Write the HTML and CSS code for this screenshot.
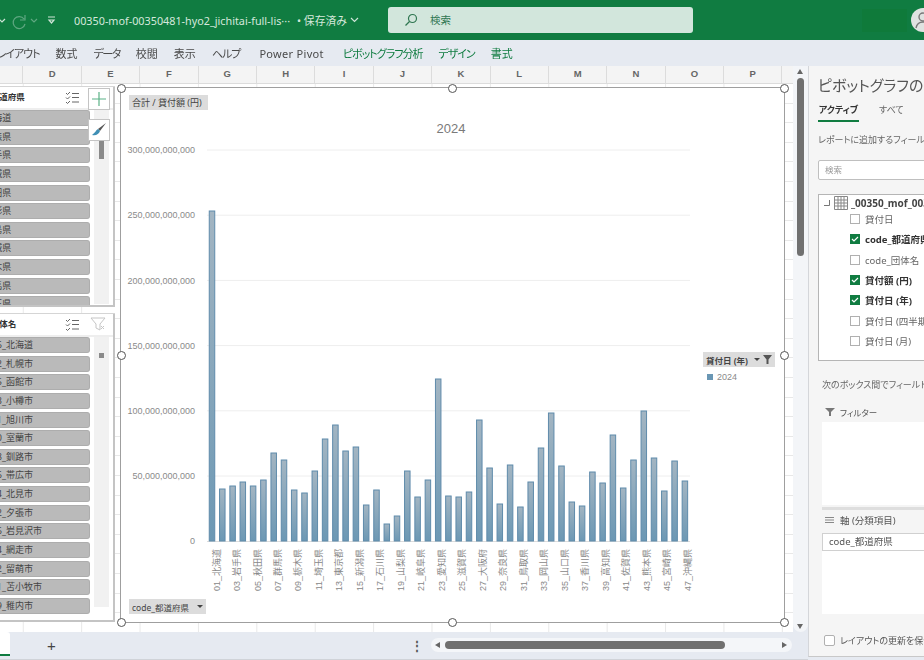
FILE: index.html
```html
<!DOCTYPE html>
<html lang="ja">
<head>
  <meta charset="UTF-8">
  <title>00350-mof-00350481-hyo2_jichitai-full-list</title>
  <link rel="stylesheet" href="styles.css">
</head>
<body>
  <header class="titlebar">
    <svg class="qat" width="62" height="20" viewBox="0 0 62 20">
      <path d="M0 9l3 3 3-3" class="qat-line"/>
      <path d="M26 5v5h-5M25 9a6 6 0 1 0 1 5" class="qat-dim"/>
      <path d="M32 9l3 3 3-3" class="qat-dim"/>
      <path d="M49 7h7M50 10h5l-2.500 3z" class="qat-line"/>
    </svg>
    <span class="filename">00350-mof-00350481-hyo2_jichitai-full-lis···</span>
    <span class="saved">• 保存済み
      <svg width="9" height="6" viewBox="0 0 9 6"><path d="M1 1l3.500 3.500L8 1" class="qat-line"/></svg>
    </span>
    <div class="search">
      <svg width="14" height="14" viewBox="0 0 14 14"><circle cx="8.500" cy="5.500" r="4" class="search-icon"/><path d="M5.500 8.500L1.500 12.500" class="search-icon"/></svg>
      <span>検索</span>
    </div>
    <div class="account-block"></div>
    <div class="avatar">
      <svg width="24" height="24" viewBox="0 0 24 24"><circle cx="12" cy="9" r="4" class="avatar-line"/><path d="M5 20c1-5 4-6 7-6s6 1 7 6" class="avatar-line"/></svg>
    </div>
  </header>

  <nav class="ribbon">
    <span class="kana">ページレイアウト</span>
    <span>数式</span>
    <span class="kana-tight">データ</span>
    <span>校閲</span>
    <span>表示</span>
    <span class="kana">ヘルプ</span>
    <span class="pp">Power Pivot</span>
    <span class="context kana">ピボットグラフ分析</span>
    <span class="context kana">デザイン</span>
    <span class="context">書式</span>
  </nav>

  <main class="workspace">
    <div class="sheet-col">
      <div class="sheet-row">
        <section class="sheet">
          <div class="col-heads">
            <span class="col-stub"></span>
            <span>D</span><span>E</span><span>F</span><span>G</span><span>H</span><span>I</span><span>J</span>
            <span>K</span><span>L</span><span>M</span><span>N</span><span>O</span><span>P</span>
          </div>
          <div class="grid">
            <div class="slicer slicer-pref">
              <div class="slicer-head">
                <span class="slicer-title">code_都道府県</span>
                <svg class="multi" width="15" height="13" viewBox="0 0 15 13"><path d="M1 2l1.500 1.500L5 1M1 6.500L2.500 8 5 5.500M1 11l1.500 1.500L5 10M7 2.500h7M7 6.500h7M7 11h7"/></svg>
              </div>
              <div class="slicer-body">
                <ul class="slicer-items">
                  <li>01_北海道</li><li>02_青森県</li><li>03_岩手県</li><li>04_宮城県</li>
                  <li>05_秋田県</li><li>06_山形県</li><li>07_福島県</li><li>08_茨城県</li>
                  <li>09_栃木県</li><li>10_群馬県</li><li>11_埼玉県</li>
                </ul>
                <div class="slicer-track"><span class="thumb-pref"></span></div>
              </div>
            </div>

            <div class="slicer slicer-city">
              <div class="slicer-head">
                <span class="slicer-title">code_団体名</span>
                <svg class="multi" width="15" height="13" viewBox="0 0 15 13"><path d="M1 2l1.500 1.500L5 1M1 6.500L2.500 8 5 5.500M1 11l1.500 1.500L5 10M7 2.500h7M7 6.500h7M7 11h7"/></svg>
                <svg class="clear" width="16" height="14" viewBox="0 0 16 14"><path d="M1 1h14l-5 6v6l-4-2V7z"/><path d="M11 9l3 3M14 9l-3 3"/></svg>
              </div>
              <div class="slicer-body">
                <ul class="slicer-items">
                  <li>010006_北海道</li><li>011002_札幌市</li><li>012025_函館市</li><li>012033_小樽市</li>
                  <li>012041_旭川市</li><li>012050_室蘭市</li><li>012068_釧路市</li><li>012076_帯広市</li>
                  <li>012084_北見市</li><li>012092_夕張市</li><li>012106_岩見沢市</li><li>012114_網走市</li>
                  <li>012122_留萌市</li><li>012131_苫小牧市</li><li>012149_稚内市</li>
                </ul>
                <div class="slicer-track"><span class="thumb-city"></span></div>
              </div>
            </div>

            <button class="float-btn float-add">
              <svg width="16" height="16" viewBox="0 0 16 16"><path d="M8 1v14M1 8h14" class="plus-line"/></svg>
            </button>
            <button class="float-btn float-brush">
              <svg width="16" height="16" viewBox="0 0 16 16"><path d="M15 1L7 7l2 2z" fill="#555"/><path d="M7 7c-2 1-3 4-6 6 4 1 7-1 8-4z" fill="#3f8fb5"/></svg>
            </button>

            <div class="chart">
              <svg class="plot" width="663" height="534" viewBox="121 88 663 534">
                <defs>
                  <linearGradient id="bar-fill" x1="0" y1="0" x2="0" y2="1">
                    <stop offset="0" stop-color="#a3b5c2"/>
                    <stop offset="1" stop-color="#6c98b4"/>
                  </linearGradient>
                </defs>
                <g class="gridlines">
                  <path d="M207 150H690M207 215.200H690M207 280.400H690M207 345.600H690M207 410.800H690M207 476H690"/>
                  <path d="M207 541.500H690" class="baseline"/>
                </g>
                <text x="451" y="133" class="chart-title">2024</text>
                <g class="y-labels">
                  <text x="195" y="153">300,000,000,000</text>
                  <text x="195" y="218">250,000,000,000</text>
                  <text x="195" y="284">200,000,000,000</text>
                  <text x="195" y="349">150,000,000,000</text>
                  <text x="195" y="414">100,000,000,000</text>
                  <text x="195" y="479">50,000,000,000</text>
                  <text x="195" y="544">0</text>
                </g>
                <g class="bars">
                  <rect x="209" y="211" width="6" height="330"/>
                  <rect x="219.300" y="489" width="6" height="52"/>
                  <rect x="229.600" y="486" width="6" height="55"/>
                  <rect x="239.800" y="482" width="6" height="59"/>
                  <rect x="250.100" y="486" width="6" height="55"/>
                  <rect x="260.400" y="480" width="6" height="61"/>
                  <rect x="270.700" y="453" width="6" height="88"/>
                  <rect x="281" y="460" width="6" height="81"/>
                  <rect x="291.200" y="490" width="6" height="51"/>
                  <rect x="301.500" y="493" width="6" height="48"/>
                  <rect x="311.800" y="471" width="6" height="70"/>
                  <rect x="322.100" y="439" width="6" height="102"/>
                  <rect x="332.400" y="425" width="6" height="116"/>
                  <rect x="342.600" y="451" width="6" height="90"/>
                  <rect x="352.900" y="447" width="6" height="94"/>
                  <rect x="363.200" y="505" width="6" height="36"/>
                  <rect x="373.500" y="490" width="6" height="51"/>
                  <rect x="383.800" y="524" width="6" height="17"/>
                  <rect x="394" y="516" width="6" height="25"/>
                  <rect x="404.300" y="471" width="6" height="70"/>
                  <rect x="414.600" y="497" width="6" height="44"/>
                  <rect x="424.900" y="480" width="6" height="61"/>
                  <rect x="435.200" y="379" width="6" height="162"/>
                  <rect x="445.400" y="496" width="6" height="45"/>
                  <rect x="455.700" y="497" width="6" height="44"/>
                  <rect x="466" y="492" width="6" height="49"/>
                  <rect x="476.300" y="420" width="6" height="121"/>
                  <rect x="486.600" y="468" width="6" height="73"/>
                  <rect x="496.800" y="504" width="6" height="37"/>
                  <rect x="507.100" y="465" width="6" height="76"/>
                  <rect x="517.400" y="507" width="6" height="34"/>
                  <rect x="527.700" y="482" width="6" height="59"/>
                  <rect x="538" y="448" width="6" height="93"/>
                  <rect x="548.200" y="413" width="6" height="128"/>
                  <rect x="558.500" y="466" width="6" height="75"/>
                  <rect x="568.800" y="502" width="6" height="39"/>
                  <rect x="579.100" y="506" width="6" height="35"/>
                  <rect x="589.400" y="472" width="6" height="69"/>
                  <rect x="599.600" y="483" width="6" height="58"/>
                  <rect x="609.900" y="435" width="6" height="106"/>
                  <rect x="620.200" y="488" width="6" height="53"/>
                  <rect x="630.500" y="460" width="6" height="81"/>
                  <rect x="640.800" y="411" width="6" height="130"/>
                  <rect x="651" y="458" width="6" height="83"/>
                  <rect x="661.300" y="491" width="6" height="50"/>
                  <rect x="671.600" y="461" width="6" height="80"/>
                  <rect x="681.900" y="481" width="6" height="60"/>
                </g>
                <g class="x-labels">
                  <text transform="translate(219.500 549) rotate(-90)">01_北海道</text>
                  <text transform="translate(240 549) rotate(-90)">03_岩手県</text>
                  <text transform="translate(260.500 549) rotate(-90)">05_秋田県</text>
                  <text transform="translate(280.900 549) rotate(-90)">07_群馬県</text>
                  <text transform="translate(301.400 549) rotate(-90)">09_栃木県</text>
                  <text transform="translate(321.900 549) rotate(-90)">11_埼玉県</text>
                  <text transform="translate(342.400 549) rotate(-90)">13_東京都</text>
                  <text transform="translate(362.900 549) rotate(-90)">15_新潟県</text>
                  <text transform="translate(383.300 549) rotate(-90)">17_石川県</text>
                  <text transform="translate(403.800 549) rotate(-90)">19_山梨県</text>
                  <text transform="translate(424.300 549) rotate(-90)">21_岐阜県</text>
                  <text transform="translate(444.800 549) rotate(-90)">23_愛知県</text>
                  <text transform="translate(465.300 549) rotate(-90)">25_滋賀県</text>
                  <text transform="translate(485.700 549) rotate(-90)">27_大阪府</text>
                  <text transform="translate(506.200 549) rotate(-90)">29_奈良県</text>
                  <text transform="translate(526.700 549) rotate(-90)">31_鳥取県</text>
                  <text transform="translate(547.200 549) rotate(-90)">33_岡山県</text>
                  <text transform="translate(567.700 549) rotate(-90)">35_山口県</text>
                  <text transform="translate(588.100 549) rotate(-90)">37_香川県</text>
                  <text transform="translate(608.600 549) rotate(-90)">39_高知県</text>
                  <text transform="translate(629.100 549) rotate(-90)">41_佐賀県</text>
                  <text transform="translate(649.600 549) rotate(-90)">43_熊本県</text>
                  <text transform="translate(670.100 549) rotate(-90)">45_宮崎県</text>
                  <text transform="translate(690.500 549) rotate(-90)">47_沖縄県</text>
                </g>
              </svg>

              <span class="field-btn field-value">合計 / 貸付額 (円)</span>
              <span class="field-btn field-axis">code_都道府県 <i class="caret"></i></span>
              <span class="field-btn field-legend">貸付日 (年) <i class="caret"></i>
                <svg width="9" height="9" viewBox="0 0 9 9"><path d="M0 0h9L5.500 4.500V9h-2V4.500z" fill="#555"/></svg>
              </span>
              <div class="legend"><i class="legend-key"></i>2024</div>

              <i class="handle h-tl"></i><i class="handle h-tc"></i><i class="handle h-tr"></i>
              <i class="handle h-ml"></i><i class="handle h-mr"></i>
              <i class="handle h-bl"></i><i class="handle h-bc"></i><i class="handle h-br"></i>
            </div>
          </div>
        </section>

        <div class="vscroll">
          <i class="arrow-up"></i>
          <span class="vthumb"></span>
          <i class="arrow-down"></i>
        </div>
      </div>

      <footer class="statusbar">
        <span class="sheet-tab"></span>
        <span class="add-sheet">+</span>
        <span class="dots">⋮</span>
        <div class="hscroll">
          <i class="arrow-left"></i>
          <span class="hthumb"></span>
          <i class="arrow-right"></i>
        </div>
      </footer>
    </div>

    <aside class="pane">
      <h2 class="pane-title">ピボットグラフのフィールド</h2>
      <div class="pane-tabs">
        <span class="pane-tab active">アクティブ</span>
        <span class="pane-tab">すべて</span>
      </div>
      <p class="pane-note">レポートに追加するフィールドを選択してください:</p>
      <div class="pane-search">検索</div>
      <div class="field-list">
        <div class="table-row">
          <svg class="tree-corner" width="6" height="6" viewBox="0 0 6 6"><path d="M0 5.500h5.500V0"/></svg>
          <svg width="14" height="14" viewBox="0 0 14 14"><path d="M.5.500h13v13H.5zM.5 4h13M.5 7h13M.5 10h13M4 .5v13M7 .5v13M10 .5v13" class="table-icon"/></svg>
          <b>_00350_mof_00350481</b>
        </div>
        <label class="field"><i class="box"></i>貸付日</label>
        <label class="field on"><i class="box"><svg width="10" height="10" viewBox="0 0 10 10"><path d="M2 5l2 2 4-4" class="tick"/></svg></i>code_都道府県</label>
        <label class="field"><i class="box"></i>code_団体名</label>
        <label class="field on"><i class="box"><svg width="10" height="10" viewBox="0 0 10 10"><path d="M2 5l2 2 4-4" class="tick"/></svg></i>貸付額 (円)</label>
        <label class="field on"><i class="box"><svg width="10" height="10" viewBox="0 0 10 10"><path d="M2 5l2 2 4-4" class="tick"/></svg></i>貸付日 (年)</label>
        <label class="field"><i class="box"></i>貸付日 (四半期)</label>
        <label class="field"><i class="box"></i>貸付日 (月)</label>
      </div>
      <p class="pane-note drag-note">次のボックス間でフィールドをドラッグしてください:</p>
      <div class="area-label">
        <svg width="10" height="10" viewBox="0 0 10 10"><path d="M0 1h10L6 5v4H4V5z" fill="#777"/></svg>
        <span>フィルター</span>
      </div>
      <div class="area-box area-filter"></div>
      <div class="area-split"></div>
      <div class="area-label">
        <svg width="10" height="10" viewBox="0 0 10 10"><path d="M0 2.500h9M0 5h9M0 7.500h9" class="lines-icon"/></svg>
        <span>軸 (分類項目)</span>
      </div>
      <div class="area-box area-axis"><div class="area-item">code_都道府県</div></div>
      <label class="defer"><i class="box"></i>レイアウトの更新を保留する</label>
    </aside>
  </main>
</body>
</html>
```

FILE: styles.css
```css
* {
  box-sizing: border-box;
}
html, body {
  margin: 0;
  height: 100%;
}
body {
  width: 924px;
  height: 660px;
  overflow: hidden;
  display: flex;
  flex-direction: column;
  font-family: "Noto Sans", "Noto Sans CJK JP", sans-serif;
  font-feature-settings: "palt";
  background: #e6eaf1;
  color: #444;
  filter: blur(0.55px);
}
i {
  font-style: normal;
}

/* title bar */
.titlebar {
  height: 40px;
  flex: none;
  display: flex;
  align-items: center;
  background: #107c41;
  color: #d5e8dc;
  font-size: 10.800px;
}
.titlebar > * {
  flex: none;
}
.qat {
  margin: 0 13px 0 -1px;
}
.qat-line {
  fill: none;
  stroke: #cfe5d8;
  stroke-width: 1.2;
}
.qat-dim {
  fill: none;
  stroke: #5fa781;
  stroke-width: 1.2;
}
.filename {
  width: 223px;
  white-space: nowrap;
}
.saved {
  width: 91px;
  display: flex;
  align-items: center;
  gap: 3px;
  white-space: nowrap;
}
.search {
  width: 305px;
  height: 26px;
  margin-top: -1px;
  padding-left: 16px;
  display: flex;
  align-items: center;
  gap: 12px;
  background: #d2e6dc;
  border-radius: 3px;
  color: #2f7651;
  font-size: 10.500px;
}
.search-icon {
  fill: none;
  stroke: #2f7651;
  stroke-width: 1.2;
}
.account-block {
  width: 45px;
  height: 23px;
  margin-left: 169px;
  background: #0f7a3a;
}
.avatar {
  width: 24px;
  height: 24px;
  margin-left: 4px;
  border-radius: 50%;
  background: #dfe3e1;
}
.avatar-line {
  fill: none;
  stroke: #777;
  stroke-width: 1.4;
}

/* ribbon tabs */
.ribbon {
  height: 26px;
  flex: none;
  margin-left: -33px;
  display: flex;
  align-items: center;
  gap: 16px;
  font-size: 11px;
  color: #4a4a4a;
  white-space: nowrap;
}
.ribbon .context {
  color: #107c41;
}
.ribbon .kana {
  letter-spacing: -1px;
}
.ribbon .kana-tight {
  letter-spacing: -1.500px;
}
.ribbon .pp {
  margin: 0 3px;
  letter-spacing: 0.300px;
}

/* sheet */
.workspace {
  flex: 1;
  min-height: 0;
  display: flex;
}
.sheet-col {
  width: 808px;
  flex: none;
  display: flex;
  flex-direction: column;
}
.sheet-row {
  flex: 1;
  min-height: 0;
  display: flex;
}
.sheet {
  width: 793px;
  flex: none;
  display: flex;
  flex-direction: column;
  overflow: hidden;
}
.col-heads {
  height: 18px;
  flex: none;
  display: flex;
  background: #f4f4f4;
  border-bottom: 1px solid #dcdcdc;
}
.col-heads span {
  width: 58.400px;
  flex: none;
  text-align: center;
  border-right: 1px solid #dcdcdc;
  font: 700 9.500px/16px "Liberation Sans", sans-serif;
  color: #666;
}
.col-heads .col-stub {
  width: 23.400px;
}
.grid {
  flex: 1;
  position: relative;
  background-color: #fff;
  background-image:
    repeating-linear-gradient(90deg, transparent 0 22.900px, #e8e8e8 22.900px 23.400px, transparent 23.400px 23.400px),
    repeating-linear-gradient(180deg, transparent 0 18.600px, #e8e8e8 18.600px 19.600px);
  background-size: 58.400px 100%, 100% 100%;
}

/* slicers */
.slicer {
  position: absolute;
  left: -62px;
  width: 177px;
  background: #fff;
  border: 1px solid #c4c4c4;
  border-width: 0 2px 2px 1px;
  box-shadow: 0 -1px 0 #d5d5d5;
}
.slicer-pref {
  top: 3px;
  height: 220px;
}
.slicer-city {
  top: 230px;
  height: 308px;
}
.slicer-head {
  height: 23px;
  position: relative;
  padding-left: 28px;
  font-size: 8.500px;
  line-height: 20px;
  border-bottom: 2px solid #eee;
  color: #333;
}
.slicer-title {
  font-weight: 700;
}
.multi {
  position: absolute;
  left: 126px;
  top: 4px;
  fill: none;
  stroke: #666;
}
.clear {
  position: absolute;
  left: 151px;
  top: 3px;
  fill: none;
  stroke: #c5c5c5;
}
.slicer-body {
  display: flex;
  overflow: hidden;
  height: calc(100% - 23px);
}
.slicer-items {
  list-style: none;
  width: 151px;
  flex: none;
  margin: 0;
  padding: 0;
}
.slicer-items li {
  height: 16px;
  margin: 0 0 2.640px 0;
  padding-left: 31px;
  background: #bababa;
  border: 1px solid #adadad;
  border-left: none;
  border-radius: 3px;
  font-size: 9px;
  line-height: 14px;
  color: #444;
  white-space: nowrap;
}
.slicer-city .slicer-items li {
  padding-left: 32px;
}
.slicer-track {
  width: 15px;
  height: 194px;
  margin-left: 4px;
  position: relative;
  background: #f1f1f1;
}
.slicer-city .slicer-track {
  height: 270px;
}
.thumb-pref {
  position: absolute;
  left: 5px;
  top: 20px;
  width: 5px;
  height: 29px;
  background: #8a8a8a;
}
.thumb-city {
  position: absolute;
  left: 5px;
  top: 16px;
  width: 5px;
  height: 5px;
  background: #8a8a8a;
}
.float-btn {
  position: absolute;
  left: 88px;
  width: 22px;
  height: 22px;
  padding: 0;
  display: flex;
  align-items: center;
  justify-content: center;
  background: #fff;
  border: 1px solid #c4c4c4;
}
.float-add {
  top: 4px;
}
.float-brush {
  top: 35px;
}
.plus-line {
  stroke: #5bb287;
  stroke-width: 1.2;
}

/* chart */
.chart {
  position: absolute;
  left: 121px;
  top: 4px;
  width: 663px;
  height: 534px;
  background: #fff;
  box-shadow: 0 0 0 1px #9f9f9f;
}
.plot {
  display: block;
}
.gridlines path {
  stroke: #eeeeee;
  fill: none;
}
.gridlines .baseline {
  stroke: #dcdcdc;
}
.chart-title {
  font: 13px "Liberation Sans", sans-serif;
  fill: #7a7a7a;
  text-anchor: middle;
}
.y-labels text {
  font: 9px "Liberation Sans", sans-serif;
  fill: #8a8a8a;
  text-anchor: end;
}
.bars rect {
  width: 5.500px;
  transform: translateX(0.250px);
  fill: url(#bar-fill);
  stroke: #5f8bab;
  stroke-width: 1;
}
.x-labels text {
  font: 9px "Liberation Sans", "Noto Sans CJK JP", sans-serif;
  fill: #888;
  text-anchor: end;
}
.field-btn {
  position: absolute;
  height: 15px;
  padding: 0 3px;
  display: flex;
  align-items: center;
  gap: 4px;
  background: #dcdcdc;
  font-size: 8.500px;
  color: #444;
  white-space: nowrap;
}
.field-value {
  left: 8px;
  top: 7px;
  width: 79px;
  font-size: 9px;
}
.field-axis {
  left: 8px;
  top: 511px;
  width: 77px;
}
.field-legend {
  left: 582px;
  top: 264px;
  width: 72px;
  gap: 3px;
  font-weight: 700;
}
.caret {
  width: 0;
  height: 0;
  margin-left: auto;
  border: 3px solid transparent;
  border-top: 3px solid #444;
  border-bottom: 0;
}
.legend {
  position: absolute;
  left: 586px;
  top: 284px;
  display: flex;
  align-items: center;
  gap: 4px;
  font: 9px "Liberation Sans", sans-serif;
  color: #8a8a8a;
}
.legend-key {
  width: 6px;
  height: 6px;
  background: #6a97b4;
}
.handle {
  position: absolute;
  width: 9px;
  height: 9px;
  margin: -4.500px 0 0 -4.500px;
  background: #fff;
  border: 1.500px solid #555;
  border-radius: 50%;
}
.h-tl { left: 0; top: 0; }
.h-tc { left: 331px; top: 0; }
.h-tr { left: 663px; top: 0; }
.h-ml { left: 0; top: 267px; }
.h-mr { left: 663px; top: 267px; }
.h-bl { left: 0; top: 534px; }
.h-bc { left: 331px; top: 534px; }
.h-br { left: 663px; top: 534px; }

/* vertical scrollbar */
.vscroll {
  width: 15px;
  flex: none;
  position: relative;
  background: #f3f5f8;
  border-radius: 0 0 8px 8px;
}
.arrow-up, .arrow-down {
  position: absolute;
  left: 4px;
  width: 0;
  height: 0;
  border: 3.500px solid transparent;
}
.arrow-up {
  top: 3px;
  border-top: 0;
  border-bottom: 5px solid #666;
}
.arrow-down {
  top: 558px;
  border-bottom: 0;
  border-top: 5px solid #666;
}
.vthumb {
  position: absolute;
  left: 4px;
  top: 12px;
  width: 7px;
  height: 178px;
  background: #707070;
  border-radius: 3.500px;
}

/* pivot pane */
.pane {
  width: 116px;
  flex: none;
  height: 591px;
  overflow: hidden;
  padding: 8px 0 0 9px;
  background: #f5f5f5;
  border-left: 1px solid #d4d6da;
  border-bottom: 1px solid #c8c8c8;
  white-space: nowrap;
}
.pane-title {
  margin: 0;
  font-size: 15px;
  line-height: 22px;
  font-weight: 400;
  color: #555;
}
.pane-tabs {
  margin-top: 5px;
  display: flex;
  gap: 20px;
  width: 200px;
  height: 21px;
}
.pane-tab {
  font-size: 9px;
  line-height: 18px;
  color: #666;
}
.pane-tab.active {
  font-weight: 700;
  color: #333;
  width: 41px;
  text-align: center;
  border-bottom: 2px solid #107c41;
}
.pane-note {
  margin: 11px 0 0;
  font-size: 9px;
  line-height: 14px;
  color: #666;
}
.pane-search {
  margin-top: 13px;
  width: 160px;
  height: 20px;
  padding-left: 6px;
  background: #fff;
  border: 1px solid #bfbfbf;
  border-radius: 2px;
  font-size: 8.500px;
  line-height: 18px;
  color: #999;
}
.field-list {
  margin-top: 14px;
  width: 160px;
  height: 167px;
  padding: 1px 0 0 5px;
  background: #fff;
  border: 1px solid #b5b5b5;
}
.table-row {
  display: flex;
  align-items: center;
  height: 14px;
  margin-bottom: -1px;
  font-size: 10px;
  color: #444;
}
.tree-corner {
  margin-right: 4px;
  fill: none;
  stroke: #777;
}
.table-row b {
  margin-left: 3px;
}
.table-icon {
  fill: none;
  stroke: #888;
}
.field {
  display: flex;
  align-items: center;
  gap: 5px;
  height: 20.300px;
  margin-left: 26px;
  font-size: 9.500px;
  color: #666;
}
.field.on {
  font-weight: 700;
  color: #333;
}
.box {
  width: 10px;
  height: 10px;
  flex: none;
  display: block;
  background: #fff;
  border: 1px solid #b0b0b0;
}
.field.on .box {
  background: #107c41;
  border-color: #107c41;
}
.box svg {
  display: block;
  margin: -1px;
}
.tick {
  fill: none;
  stroke: #fff;
  stroke-width: 1.200;
}
.drag-note {
  margin: 17px 0 0 4px;
}
.area-label {
  display: flex;
  align-items: center;
  gap: 5px;
  height: 16px;
  margin: 12px 0 0 7px;
  font-size: 8.500px;
  color: #555;
}
.area-box {
  width: 110px;
  margin-left: 4px;
  background: #fff;
}
.area-filter {
  height: 83px;
  margin-top: 2px;
}
.area-split {
  width: 110px;
  height: 3px;
  margin: 2px 0 0 4px;
  background: #dedede;
}
.lines-icon {
  stroke: #888;
}
.area-split + .area-label {
  margin-top: 2px;
  font-size: 9.500px;
}
.area-axis {
  height: 81px;
  margin-top: 5px;
}
.area-item {
  height: 18px;
  padding-left: 6px;
  border: 1px solid #d0d0d0;
  font-size: 9.500px;
  line-height: 16px;
  color: #555;
}
.defer {
  display: flex;
  align-items: center;
  gap: 5px;
  margin: 20px 0 0 6px;
  font-size: 9px;
  color: #555;
}
.defer .box {
  width: 11px;
  height: 11px;
  border-radius: 2px;
}

/* bottom bar */
.statusbar {
  height: 28px;
  flex: none;
  position: relative;
  display: flex;
  align-items: center;
  background: #e6eaf1;
  border-bottom: 1px solid #d0d3d8;
}
.sheet-tab {
  width: 10px;
  height: 24px;
  margin-top: -4px;
  background: #fff;
  border-bottom: 2px solid #107c41;
  border-radius: 0 3px 0 0;
}
.add-sheet {
  margin-left: 37px;
  font: 15px/1 "Liberation Sans", sans-serif;
  color: #444;
}
.dots {
  position: absolute;
  left: 411px;
  font-size: 12px;
  font-weight: 700;
  color: #555;
}
.hscroll {
  position: absolute;
  left: 431px;
  top: 6px;
  width: 361px;
  height: 14px;
  background: #f4f6f9;
  border-radius: 7px;
}
.hthumb {
  position: absolute;
  left: 14px;
  top: 3px;
  width: 280px;
  height: 8px;
  background: #707070;
  border-radius: 4px;
}
.arrow-left, .arrow-right {
  position: absolute;
  top: 4px;
  width: 0;
  height: 0;
  border: 3.500px solid transparent;
}
.arrow-left {
  left: 4px;
  border-left: 0;
  border-right: 5px solid #666;
}
.arrow-right {
  left: 351px;
  border-right: 0;
  border-left: 5px solid #666;
}
```
